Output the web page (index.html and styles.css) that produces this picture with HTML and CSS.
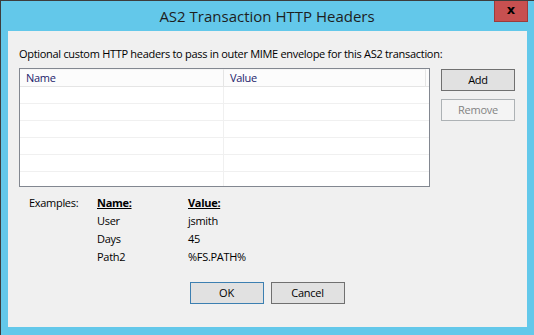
FILE: index.html
```html
<!DOCTYPE html>
<html lang="en">
<head>
  <meta charset="UTF-8">
  <title>AS2 Transaction HTTP Headers</title>
  <link rel="stylesheet" href="styles.css">
</head>
<body>
  <div class="window">
    <div class="titlebar">
      <div class="title">AS2 Transaction HTTP Headers</div>
      <div class="close-btn">x</div>
    </div>
    <div class="client">
      <div class="intro">Optional custom HTTP headers to pass in outer MIME envelope for this AS2 transaction:</div>

      <div class="list-row">
        <div class="listview">
          <div class="lv-header">
            <div class="lv-col name-col">Name</div>
            <div class="lv-col value-col">Value</div>
          </div>
          <div class="lv-row"><div class="lv-cell name-col"></div><div class="lv-cell value-col"></div></div>
          <div class="lv-row"><div class="lv-cell name-col"></div><div class="lv-cell value-col"></div></div>
          <div class="lv-row"><div class="lv-cell name-col"></div><div class="lv-cell value-col"></div></div>
          <div class="lv-row"><div class="lv-cell name-col"></div><div class="lv-cell value-col"></div></div>
          <div class="lv-row"><div class="lv-cell name-col"></div><div class="lv-cell value-col"></div></div>
          <div class="lv-row"><div class="lv-cell name-col"></div><div class="lv-cell value-col"></div></div>
        </div>
        <div class="side-buttons">
          <button class="btn">Add</button>
          <button class="btn disabled">Remove</button>
        </div>
      </div>

      <div class="examples">
        <div>Examples:</div>
        <div class="ex-head">Name:</div>
        <div class="ex-head">Value:</div>
        <div></div><div>User</div><div>jsmith</div>
        <div></div><div>Days</div><div>45</div>
        <div></div><div>Path2</div><div>%FS.PATH%</div>
      </div>

      <div class="footer">
        <button class="btn default">OK</button>
        <button class="btn">Cancel</button>
      </div>
    </div>
  </div>
</body>
</html>
```

FILE: styles.css
```css
* {
  margin: 0;
  padding: 0;
  box-sizing: border-box;
}
body {
  background: #fff;
  font-family: "Segoe UI", "Open Sans", sans-serif;
  font-size: 11px;
  letter-spacing: -0.3px;
  color: #000;
}
.window {
  position: relative;
  width: 534px;
  height: 335px;
  background: #63c8ea;
  border-left: 1px solid #3d3d3d;
  border-top: 1px solid #3d3d3d;
  display: flex;
  flex-direction: column;
}
.titlebar {
  height: 30px;
  display: flex;
  align-items: center;
  justify-content: center;
}
.title {
  font-size: 15px;
  letter-spacing: 0;
  color: #1e1e1e;
  margin-left: -1px;
}
.close-btn {
  position: absolute;
  top: 0;
  left: 493px;
  width: 34px;
  height: 21px;
  background: #c75050;
  border: 1px solid #9c3b3b;
  border-top: none;
  color: #000;
  font-family: "DejaVu Sans", sans-serif;
  font-weight: bold;
  font-size: 13px;
  letter-spacing: 0;
  line-height: 17px;
  text-align: center;
}
.client {
  margin: 0 7px 0 7px;
  height: 296px;
  background: #f0f0f0;
  padding: 15px 0 0 11px;
  display: flex;
  flex-direction: column;
}
.intro {
  line-height: 16px;
  height: 16px;
  white-space: nowrap;
}
.list-row {
  display: flex;
  margin-top: 6px;
}
.listview {
  width: 411px;
  height: 119px;
  border: 1px solid #828790;
  background: #fff;
  overflow: hidden;
}
.lv-header {
  display: flex;
  height: 18px;
  border-bottom: 1px solid #e5e5e5;
  background: #fcfcfc;
}
.lv-col {
  line-height: 16px;
  padding-left: 6px;
  color: #1b1b6b;
  border-right: 1px solid #e5e5e5;
  border-top: 1px solid #f5f5f5;
}
.name-col {
  width: 204px;
  flex-shrink: 0;
}
.value-col {
  width: 202px;
  flex-shrink: 0;
}
.lv-row {
  display: flex;
  height: 17px;
  border-bottom: 1px solid #f0f0f0;
}
.lv-cell.name-col {
  border-right: 1px solid #f0f0f0;
}
.side-buttons {
  display: flex;
  flex-direction: column;
  gap: 8px;
  margin: 1px 0 0 11px;
}
.btn {
  width: 74px;
  height: 22px;
  font-family: "Segoe UI", "Open Sans", sans-serif;
  font-size: 11px;
  letter-spacing: -0.25px;
  color: #000;
  background: #e1e1e1;
  border: 1px solid #707070;
  line-height: 18px;
}
.btn.disabled {
  background: #f4f4f4;
  border-color: #adb2b5;
  color: #838383;
}
.btn.default {
  border-color: #3c7fb1;
}
.examples {
  display: grid;
  grid-template-columns: 68px 91px auto;
  grid-auto-rows: 18px;
  line-height: 18px;
  margin: 7px 0 0 10px;
}
.ex-head {
  font-weight: bold;
  text-decoration: underline;
}
.footer {
  display: flex;
  justify-content: center;
  gap: 7px;
  margin: 16px 0 0 -12px;
}
```
